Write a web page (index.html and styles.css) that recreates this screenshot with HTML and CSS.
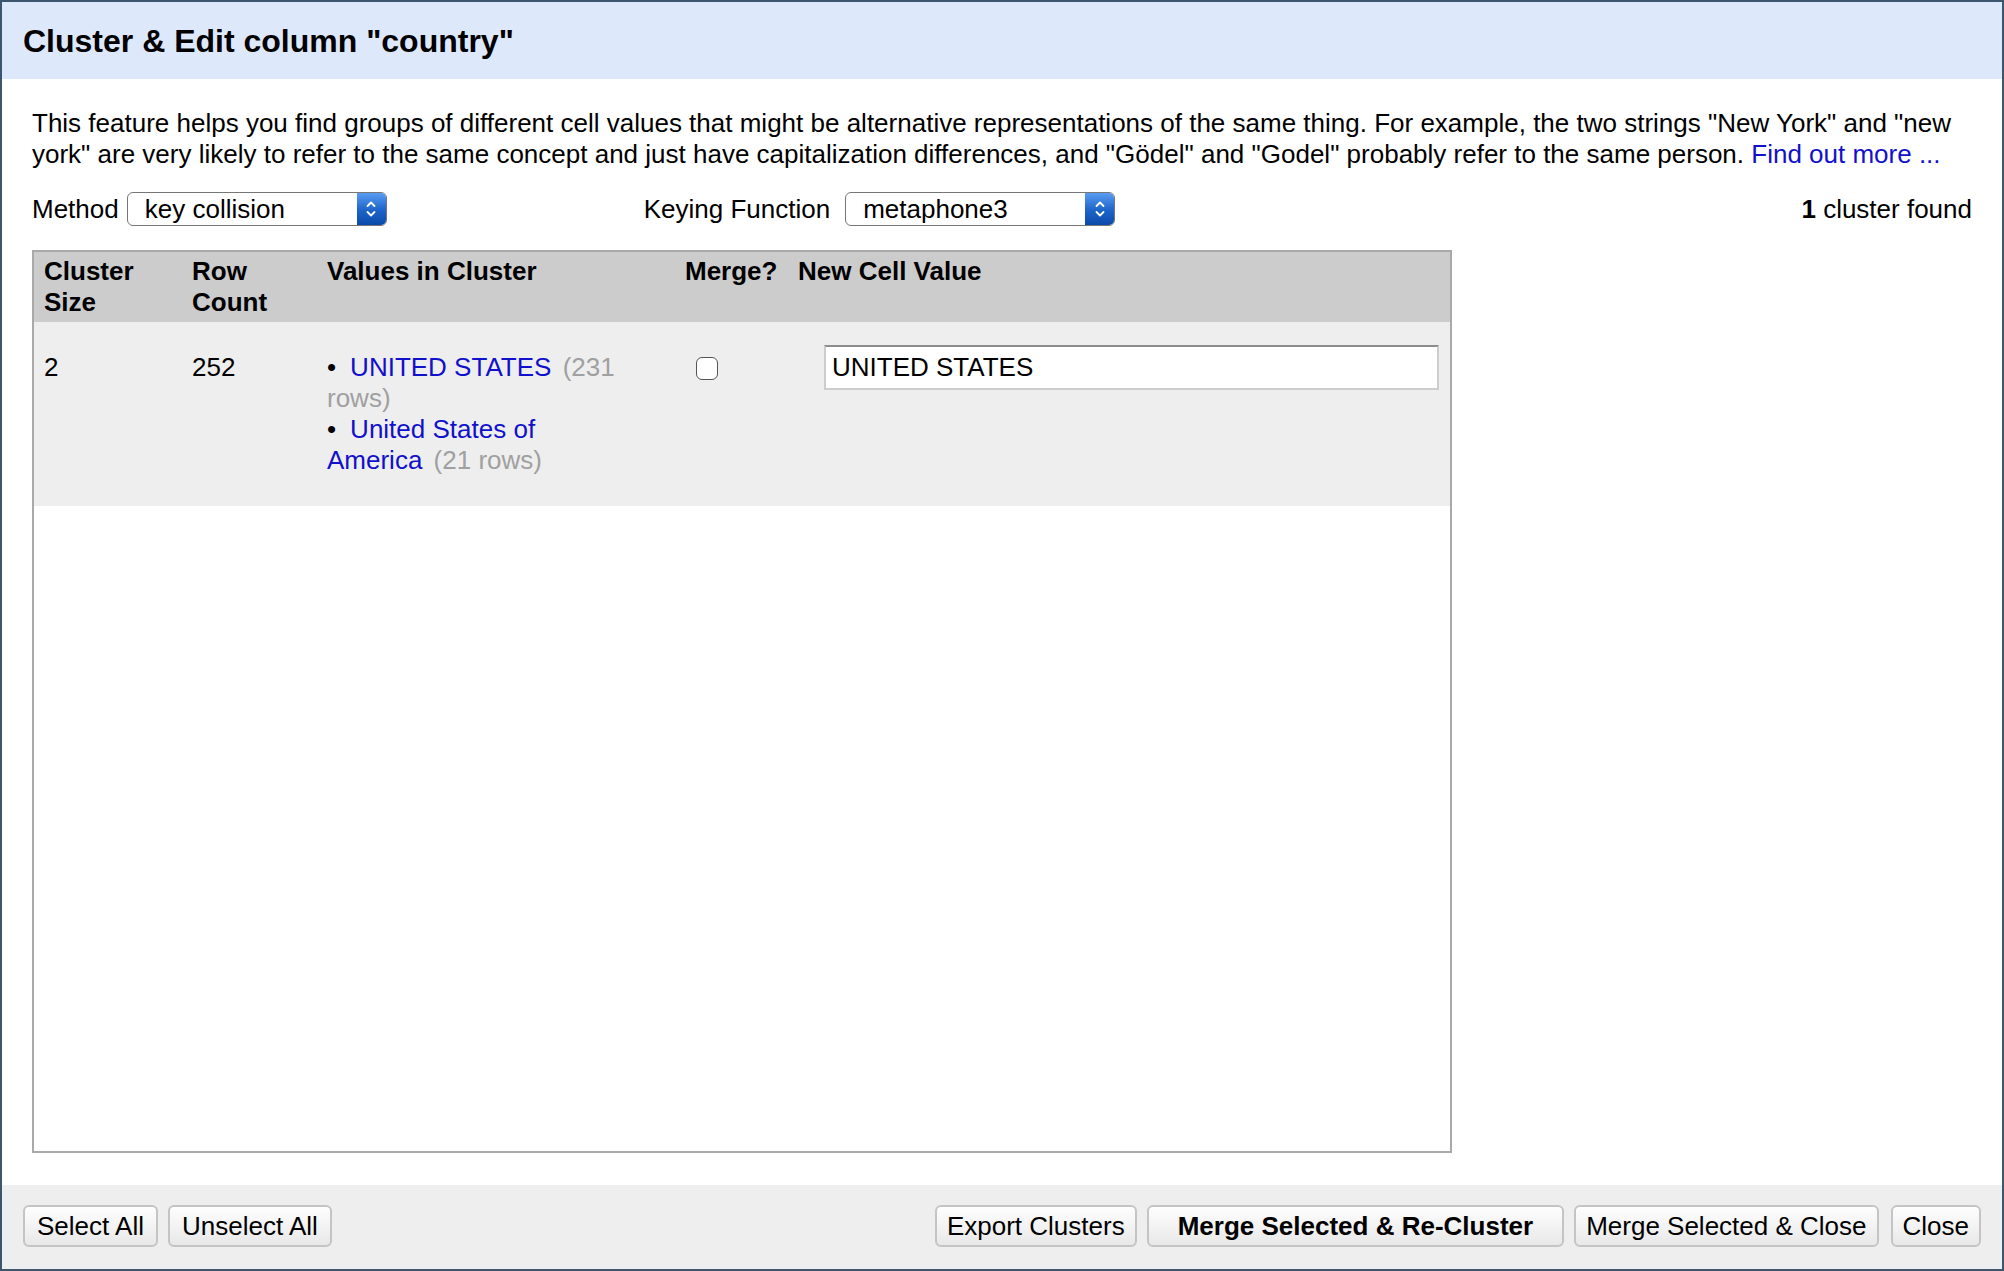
FILE: index.html
```html
<!DOCTYPE html>
<html lang="en">
<head>
<meta charset="utf-8">
<title>Cluster &amp; Edit column "country"</title>
<link rel="stylesheet" href="styles.css">
</head>
<body>
<div class="dialog">
  <header class="dialog-header">
    <h1>Cluster &amp; Edit column "country"</h1>
  </header>
  <main class="dialog-body">
    <p class="intro">This feature helps you find groups of different cell values that might be alternative representations of the same thing. For example, the two strings "New York" and "new york" are very likely to refer to the same concept and just have capitalization differences, and "Gödel" and "Godel" probably refer to the same person. <a href="#" class="link">Find out more ...</a></p>
    <div class="controls">
      <div class="ctl">
        <span class="ctl-label">Method</span>
        <div class="select select-method">
          <span class="select-value">key collision</span>
          <span class="select-arrow"><svg width="12" height="22" viewBox="0 0 12 22"><path d="M2.5 8 L6 4.5 L9.5 8" fill="none" stroke="#fff" stroke-width="1.8" stroke-linecap="round" stroke-linejoin="round"/><path d="M2.5 14 L6 17.5 L9.5 14" fill="none" stroke="#fff" stroke-width="1.8" stroke-linecap="round" stroke-linejoin="round"/></svg></span>
        </div>
      </div>
      <div class="ctl ctl-keying">
        <span class="ctl-label">Keying Function</span>
        <div class="select select-keying">
          <span class="select-value">metaphone3</span>
          <span class="select-arrow"><svg width="12" height="22" viewBox="0 0 12 22"><path d="M2.5 8 L6 4.5 L9.5 8" fill="none" stroke="#fff" stroke-width="1.8" stroke-linecap="round" stroke-linejoin="round"/><path d="M2.5 14 L6 17.5 L9.5 14" fill="none" stroke="#fff" stroke-width="1.8" stroke-linecap="round" stroke-linejoin="round"/></svg></span>
        </div>
      </div>
      <div class="count"><b>1</b> cluster found</div>
    </div>
    <div class="table-wrap">
      <table class="clusters">
        <colgroup>
          <col class="c-size">
          <col class="c-count">
          <col class="c-values">
          <col class="c-merge">
          <col class="c-new">
        </colgroup>
        <thead>
          <tr>
            <th>Cluster Size</th>
            <th>Row Count</th>
            <th>Values in Cluster</th>
            <th>Merge?</th>
            <th>New Cell Value</th>
          </tr>
        </thead>
        <tbody>
          <tr>
            <td>2</td>
            <td>252</td>
            <td class="values">
              <ul>
                <li><a href="#" class="link">UNITED STATES</a> <span class="rows">(231 rows)</span></li>
                <li><a href="#" class="link">United States of America</a> <span class="rows">(21 rows)</span></li>
              </ul>
            </td>
            <td><input type="checkbox" class="merge-check"></td>
            <td class="new-value"><input type="text" class="new-input" value="UNITED STATES"></td>
          </tr>
        </tbody>
      </table>
    </div>
  </main>
  <footer class="dialog-footer">
    <div class="btn-group btn-group-left">
      <button class="btn">Select All</button>
      <button class="btn">Unselect All</button>
    </div>
    <div class="btn-group">
      <button class="btn">Export Clusters</button>
      <button class="btn btn-primary">Merge Selected &amp; Re-Cluster</button>
      <button class="btn">Merge Selected &amp; Close</button>
      <button class="btn btn-close">Close</button>
    </div>
  </footer>
</div>
</body>
</html>
```
FILE: styles.css
```css
html, body {
  margin: 0;
  padding: 0;
}

body {
  font-family: "Liberation Sans", Arial, Helvetica, sans-serif;
  font-size: 26px;
  color: #000;
  background: #fff;
}

.dialog {
  box-sizing: border-box;
  width: 2004px;
  height: 1271px;
  border: 2px solid #3c5670;
  display: flex;
  flex-direction: column;
  background: #fff;
}

.dialog-header {
  flex: none;
  height: 77px;
  background: #dde9fb;
  display: flex;
  align-items: center;
  padding-left: 21px;
}

.dialog-header h1 {
  margin: 0;
  font-size: 32px;
  font-weight: bold;
  line-height: 38px;
}

.dialog-body {
  flex: 1;
  min-height: 0;
  display: flex;
  flex-direction: column;
  padding: 29px 30px 32px 30px;
}

.intro {
  margin: 0;
  line-height: 31px;
}

.link {
  color: #1111cc;
  text-decoration: none;
}

.controls {
  display: flex;
  align-items: center;
  height: 34px;
  margin-top: 22px;
}

.ctl {
  display: flex;
  align-items: center;
  gap: 8px;
}

.ctl-keying {
  margin-left: 257px;
  gap: 15px;
}

.count {
  margin-left: auto;
}

.select {
  box-sizing: border-box;
  height: 34px;
  border: 1.5px solid #767676;
  border-radius: 6px;
  display: flex;
  align-items: stretch;
  background: #fff;
  overflow: hidden;
}

.select-method {
  width: 260px;
}

.select-keying {
  width: 270px;
}

.select-value {
  flex: 1;
  padding-left: 17px;
  line-height: 32px;
  white-space: nowrap;
}

.select-arrow {
  width: 29px;
  display: flex;
  align-items: center;
  justify-content: center;
  background: linear-gradient(#5a9cf2, #1c63c9 55%, #0a4aa8);
}

.table-wrap {
  flex: 1;
  box-sizing: border-box;
  width: 1420px;
  margin-top: 24px;
  border: 2px solid #a9a9a9;
  background: #fff;
}

.clusters {
  width: 100%;
  table-layout: fixed;
  border-collapse: collapse;
}

.c-size { width: 148px; }
.c-count { width: 135px; }
.c-values { width: 358px; }
.c-merge { width: 113px; }

.clusters th {
  background: #cccccc;
  text-align: left;
  vertical-align: top;
  font-weight: bold;
  line-height: 31px;
  padding: 4px 10px;
}

.clusters td {
  background: #eeeeee;
  vertical-align: top;
  line-height: 31px;
  padding: 30px 10px;
}

.clusters td.values {
  padding-right: 50px;
}

.values ul {
  margin: 0;
  padding: 0;
  list-style: none;
}

.values li::before {
  content: "\2022";
  margin-right: 14px;
}

.rows {
  color: #a0a0a0;
  margin-left: 4px;
}

.merge-check {
  -webkit-appearance: none;
  appearance: none;
  box-sizing: border-box;
  width: 22px;
  height: 23px;
  margin: 0 0 0 11px;
  border: 1.8px solid #555;
  border-radius: 6px;
  background: #fff;
  vertical-align: middle;
  position: relative;
  top: -1px;
}

.clusters td.new-value {
  padding-top: 23px;
}

.new-input {
  box-sizing: border-box;
  display: block;
  width: 615px;
  height: 45px;
  margin-left: 26px;
  padding: 0 6px;
  font: inherit;
  font-size: 26px;
  color: #000;
  border: 2px solid #cdcdcd;
  border-top-color: #8c8c8c;
  background: #fff;
  outline: none;
}

.dialog-footer {
  flex: none;
  box-sizing: border-box;
  height: 84px;
  background: #eeeeee;
  display: flex;
  justify-content: space-between;
  align-items: flex-start;
  padding: 20px 21px 0 21px;
}

.btn-group {
  display: flex;
  gap: 10px;
}

.btn {
  box-sizing: border-box;
  height: 42px;
  padding: 0 10px;
  border: 2px solid #c4c4c4;
  border-radius: 6px;
  background: linear-gradient(#fefefe, #e8e8e8);
  font-family: inherit;
  font-size: 26px;
  color: #000;
  line-height: 38px;
  white-space: nowrap;
}

.btn-group-left .btn {
  padding: 0 12px;
}

.btn-primary {
  font-weight: bold;
  padding: 0 29px;
}

.btn-close {
  margin-left: 2px;
}
```
